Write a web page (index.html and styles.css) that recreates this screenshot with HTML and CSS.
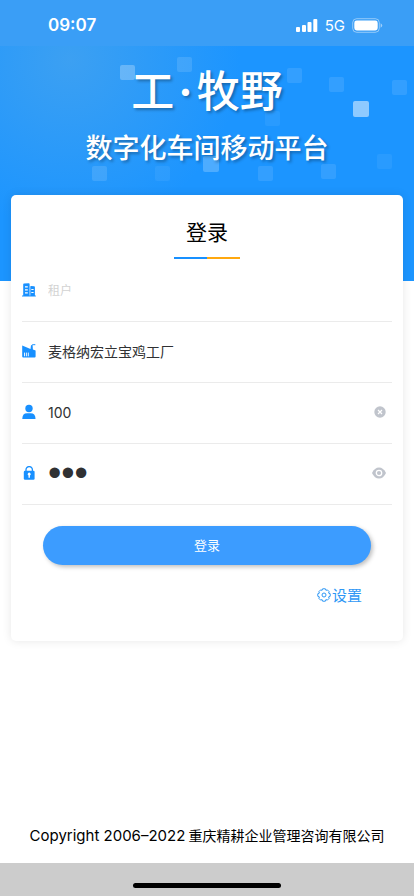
FILE: index.html
```html
<!DOCTYPE html>
<html lang="zh-CN">
<head>
    <meta charset="UTF-8">
    <meta name="viewport" content="width=device-width, initial-scale=1">
    <title>登录</title>
    <link rel="stylesheet" href="styles.css">
</head>
<body>
<header class="banner">
    <svg class="squares" viewBox="0 0 414 281" preserveAspectRatio="xMidYMin slice" fill="#fff" aria-hidden="true">
        <rect x="120" y="65" width="15" height="15" rx="2" opacity=".26"/>
        <rect x="177" y="57" width="15" height="15" rx="2" opacity=".12"/>
        <rect x="287" y="68" width="15" height="15" rx="2" opacity=".1"/>
        <rect x="329" y="77" width="15" height="15" rx="2" opacity=".1"/>
        <rect x="392" y="80" width="15" height="15" rx="2" opacity=".1"/>
        <rect x="353" y="101" width="16" height="16" rx="2" opacity=".5"/>
        <rect x="265" y="111" width="15" height="15" rx="2" opacity=".06"/>
        <rect x="377" y="154" width="15" height="15" rx="2" opacity=".06"/>
        <rect x="321" y="164" width="15" height="15" rx="2" opacity=".1"/>
        <rect x="258" y="166" width="15" height="15" rx="2" opacity=".1"/>
        <rect x="203" y="156" width="16" height="16" rx="2" opacity=".22"/>
        <rect x="155" y="166" width="15" height="15" rx="2" opacity=".06"/>
        <rect x="92" y="166" width="15" height="15" rx="2" opacity=".12"/>
    </svg>
    <div class="status">
        <span class="time">09:07</span>
        <div class="signal">
            <svg width="22" height="14" viewBox="0 0 22 14" fill="#fff" aria-hidden="true">
                <rect x="0" y="9" width="4" height="5" rx="1"/>
                <rect x="6" y="7" width="4" height="7" rx="1"/>
                <rect x="11.5" y="4" width="4" height="10" rx="1"/>
                <rect x="17.3" y="1" width="4" height="13" rx="1"/>
            </svg>
            <span>5G</span>
            <svg width="31" height="15" viewBox="0 0 31 15" aria-hidden="true">
                <rect x=".7" y=".7" width="26.6" height="13.6" rx="4" fill="none" stroke="#fff" opacity=".45"/>
                <rect x="2.3" y="2.6" width="23.4" height="9.8" rx="2.4" fill="#fff"/>
                <path d="M28.6 5.2q1.6.7 1.6 2.3t-1.6 2.3z" fill="#fff" opacity=".5"/>
            </svg>
        </div>
    </div>
    <h1>工<span>·</span>牧野</h1>
    <p class="slogan">数字化车间移动平台</p>
</header>

<main class="card">
    <h2>登录</h2>
    <form>
        <div class="row">
            <label for="tenant" title="租户">
                <svg width="14" height="14" viewBox="0 0 14 14" aria-hidden="true">
                    <path fill="#1890ff" fill-rule="evenodd" d="M1.2 1.5Q1.2.6 2 .6L6.800.2Q7.600.2 7.600 1v11.600h.7V3.600q0-.8.800-.7l3 .3q.8.100.8 1v8.400h.9V13.600H0v-1h1.200zM3 3.200v1.200h2.800V3.200zm0 3v1.200h2.800V6.200zm0 3v1.200h2.800V9.200zM9.300 6v1.100h2.300V6zm0 3v1.100h2.300V9z"/>
                </svg>
            </label>
            <input class="small" type="text" id="tenant" placeholder="租户">
        </div>
        <div class="row">
            <label for="factory" title="工厂">
                <svg width="14" height="14" viewBox="0 0 14 14" aria-hidden="true">
                    <path fill="#1890ff" d="M.2 1.500l8.300 3.400L9 1.300h1.600l.3 4.200 2.700 1.100v6q0 1-1 1H1.200q-1 0-1-1z"/>
                    <path d="M9.800 1.600q.2-1.100 1.300-.9h2.200" fill="none" stroke="#1890ff"/>
                    <path d="M2.500 8.600v3.700M4.400 8.600v3.700M6.300 8.600v3.700" stroke="#fff" opacity=".9"/>
                </svg>
            </label>
            <input type="text" id="factory" value="麦格纳宏立宝鸡工厂">
        </div>
        <div class="row">
            <label for="user" title="账号">
                <svg width="14" height="16" viewBox="0 0 14 16" fill="#1890ff" aria-hidden="true">
                    <circle cx="7" cy="4.500" r="3.700"/>
                    <path d="M.6 15q-.3 0-.3-.5Q.5 9.200 5 9.200h3.600q4.700 0 4.900 5.300 0 .5-.4.5z"/>
                </svg>
            </label>
            <input type="text" id="user" value="100">
            <button class="tool" type="button" aria-label="清空">
                <svg width="12" height="12" viewBox="0 0 12 12" aria-hidden="true">
                    <circle cx="6" cy="6" r="5.700" fill="#c0c4cc"/>
                    <path d="M4 4l4 4M8 4l-4 4" stroke="#fff" stroke-width="1.200"/>
                </svg>
            </button>
        </div>
        <div class="row">
            <label for="pwd" title="密码">
                <svg width="14" height="14" viewBox="0 0 14 14" aria-hidden="true">
                    <path d="M4 6V3.800a3.200 3.200 0 0 1 6.400 0V6" fill="none" stroke="#1890ff" stroke-width="1.300"/>
                    <rect x="1.800" y="4.800" width="10.800" height="9" rx="1.200" fill="#1890ff"/>
                    <path d="M7.900 9.500a1.500 1.500 0 1 0-1.400 0v2.200h1.400z" fill="#fff"/>
                </svg>
            </label>
            <input type="password" id="pwd" value="100">
            <button class="tool" type="button" aria-label="显示密码">
                <svg width="14" height="12" viewBox="0 0 14 12" aria-hidden="true">
                    <path d="M0 6Q2.600.5 7 .5T14 6Q11.400 11.500 7 11.500T0 6z" fill="#c0c4cc"/>
                    <circle cx="7" cy="6" r="2.700" fill="none" stroke="#fff" stroke-width="1.300"/>
                </svg>
            </button>
        </div>
        <button class="login" type="button">登录</button>
    </form>
    <a class="setting" href="#">
        <svg width="14" height="14" viewBox="0 0 14 14" fill="none" stroke="#2e97f5" stroke-linejoin="round" aria-hidden="true">
            <path d="M5.600.8h2.800l.5 1.500 1.500-.4 1.700 1.700-.5 1.500 1.600.6v2.600l-1.600.6.5 1.500-1.700 1.700-1.500-.5-.5 1.600H5.600l-.5-1.600-1.500.5-1.700-1.700.5-1.500L.8 8.300V5.700l1.600-.6-.5-1.500 1.700-1.700 1.500.4z"/>
            <circle cx="7" cy="7" r="2"/>
        </svg>
        设置
    </a>
</main>

<footer>
    <p><span>Copyright 2006–2022</span> 重庆精耕企业管理咨询有限公司</p>
    <div class="home"></div>
</footer>
</body>
</html>
```
FILE: styles.css
```css
*{
    box-sizing: border-box;
    margin: 0;
    padding: 0;
}
body{
    display: flex;
    flex-direction: column;
    min-height: 100vh;
    background: #fff;
    color: #000;
    font-family: "Noto Sans CJK SC", sans-serif;
    font-size: 14px;
}
.banner{
    position: relative;
    height: 281px;
    overflow: hidden;
    background: radial-gradient(circle at 70px 60px, #3ca0f2 0, #1c95ff 170px);
    color: #fff;
    text-align: center;
}
.squares{
    position: absolute;
    top: 0;
    left: 0;
    width: 100%;
    height: 100%;
}
.status{
    display: flex;
    justify-content: space-between;
    align-items: center;
    height: 46px;
    padding: 4px 31px 0 48px;
    background: #3a9ef6;
    position: relative;
    font-family: Inter, sans-serif;
}
.time{
    font-size: 17px;
    font-weight: 600;
}
.signal{
    display: flex;
    align-items: center;
    gap: 7px;
    font-size: 15px;
}
.banner h1,
.slogan{
    position: relative;
    font-weight: 500;
    text-shadow: 2px 2px 3px rgba(0,0,0,.3);
}
.banner h1{
    margin-top: 12px;
    font-size: 43px;
    line-height: 60px;
}
.banner h1 span{
    margin: 0 4px;
    font-family: Inter, sans-serif;
    font-weight: 700;
    line-height: 1;
}
.slogan{
    margin-top: 9px;
    font-size: 27px;
    line-height: 40px;
}
.card{
    position: relative;
    margin: -86px 11px 0;
    padding: 16px 11px 36px;
    border-radius: 5px;
    background: #fff;
    box-shadow: 0 0 10px rgba(0,0,0,.1);
}
.card h2{
    font-size: 21px;
    font-weight: 400;
    line-height: 40px;
    text-align: center;
}
.card h2::after{
    content: "";
    display: block;
    width: 66px;
    height: 2px;
    margin: 6px auto 2px;
    background: linear-gradient(90deg, #1890ff 50%, #ffa80f 50%);
}
.row{
    display: flex;
    align-items: center;
    height: 61px;
    padding: 0 6px 2px 0;
    border-bottom: 1px solid #ebebeb;
}
.row label{
    display: flex;
    width: 26px;
}
.row input{
    flex: 1;
    min-width: 0;
    height: 40px;
    border: 0;
    outline: 0;
    background: none;
    color: #303133;
    font: 14px Inter, "Noto Sans CJK SC", sans-serif;
}
.row .small{
    font-size: 12px;
}
.row input::placeholder{
    color: #d2d2d2;
}
.row input[type=password]{
    font: 38px "Liberation Sans", sans-serif;
}
.tool{
    display: flex;
    border: 0;
    background: none;
    cursor: pointer;
}
.login{
    display: block;
    width: calc(100% - 42px);
    height: 39px;
    margin: 21px auto 0;
    padding-bottom: 2px;
    border: 0;
    border-radius: 20px;
    background: #3c9cff;
    box-shadow: 2px 2px 4px rgba(0,0,0,.25);
    color: #fff;
    font: 13px "Noto Sans CJK SC", sans-serif;
    cursor: pointer;
}
.setting{
    display: flex;
    align-items: center;
    justify-content: flex-end;
    gap: 1px;
    margin: 20px 30px 0 0;
    color: #2e97f5;
    font-size: 15px;
    line-height: 20px;
    text-decoration: none;
}
footer{
    margin-top: auto;
    text-align: center;
}
footer p{
    margin-bottom: 18px;
    line-height: 20px;
}
footer p span{
    font: 15px Inter, sans-serif;
}
.home{
    height: 33px;
    padding-top: 20px;
    background: #ccc;
}
.home::before{
    content: "";
    display: block;
    width: 148px;
    height: 5px;
    margin: 0 auto;
    border-radius: 3px;
    background: #000;
}
```
